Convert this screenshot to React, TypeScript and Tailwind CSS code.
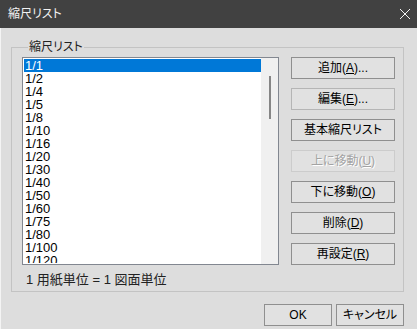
const scales = [
  "1/1", "1/2", "1/4", "1/5", "1/8", "1/10", "1/16", "1/20",
  "1/30", "1/40", "1/50", "1/60", "1/75", "1/80", "1/100", "1/120",
];

const font = "font-['Liberation_Sans','Noto_Sans_CJK_JP',sans-serif] [font-feature-settings:'palt']";

function Btn({
  children,
  disabled,
  light,
}: {
  children: React.ReactNode;
  disabled?: boolean;
  light?: boolean;
}) {
  const border = disabled ? "border-[#cccccc]" : light ? "border-[#b5b5b5]" : "border-[#8f8f8f]";
  return (
    <div
      className={`h-[22px] w-[104px] flex items-center justify-center border ${border} bg-[#e1e1e1] text-[12px] leading-none ${
        disabled ? "text-[#a3a3a3] [text-shadow:1px_1px_0_#ffffff]" : "text-black"
      }`}
    >
      {children}
    </div>
  );
}

export default function App() {
  return (
    <div className={`w-[417px] h-[329px] bg-[#dddddd] overflow-hidden flex flex-col ${font}`}>
      {/* Title bar */}
      <div className="h-[28px] shrink-0 bg-[#414141] flex items-center justify-between pl-[8px] pr-[5px]">
        <span className="text-[12px] text-[#f2f2f2]">縮尺リスト</span>
        <svg width="12" height="12" viewBox="0 0 12 12" className="mr-[1px]">
          <path d="M1 1 L11 11 M11 1 L1 11" stroke="#f2f2f2" strokeWidth="1" fill="none" />
        </svg>
      </div>

      <div className="flex-1 border-l border-[#f4f4f4] pl-[10px] pt-[12px]">
        <fieldset className="w-[393px] border border-[#c3c3c3] pl-[10px] pr-[8px] pt-[3px] pb-[4px]">
          <legend className="ml-[6px] px-[1px] text-[12px] leading-[14px] text-[#222]">縮尺リスト</legend>
          <div className="flex">
            <div className="flex flex-col">
              {/* List box */}
              <div className="w-[257px] h-[208px] border border-[#828790] bg-white flex p-[1px] pr-0">
                <div className="w-[237px] overflow-hidden">
                  {scales.map((s, i) => (
                    <div
                      key={s}
                      className={`h-[13px] pl-[1px] text-[13px] leading-[13px] ${
                        i === 0 ? "bg-[#0078d7] text-white" : "text-black"
                      }`}
                    >
                      {s}
                    </div>
                  ))}
                </div>
                <div className="w-[17px] -my-[1px] bg-[#f0f0f0] flex justify-center pt-[18px]">
                  <div className="w-[2px] h-[43px] bg-[#868686]" />
                </div>
              </div>
              <div className="mt-[7px] pl-[4px] text-[13px] leading-[15px] text-[#222]">
                1 用紙単位 = 1 図面単位
              </div>
            </div>

            <div className="ml-[12px] flex flex-col gap-[9px]">
              <Btn>
                追加(<span className="underline">A</span>)...
              </Btn>
              <Btn light>
                編集(<span className="underline">E</span>)...
              </Btn>
              <Btn>基本縮尺リスト</Btn>
              <Btn disabled>
                上に移動(<span className="underline">U</span>)
              </Btn>
              <Btn>
                下に移動(<span className="underline">O</span>)
              </Btn>
              <Btn>
                削除(<span className="underline">D</span>)
              </Btn>
              <Btn>
                再設定(<span className="underline">R</span>)
              </Btn>
            </div>
          </div>
        </fieldset>

        <div className="w-[393px] mt-[12px] flex justify-end gap-[4px]">
          <div className="w-[68px] h-[22px] border border-[#8f8f8f] bg-[#e1e1e1] flex items-center justify-center text-[12px] text-black">
            OK
          </div>
          <div className="w-[68px] h-[22px] border border-[#8f8f8f] bg-[#e1e1e1] flex items-center justify-center text-[12px] text-black">
            キャンセル
          </div>
        </div>
      </div>
    </div>
  );
}
